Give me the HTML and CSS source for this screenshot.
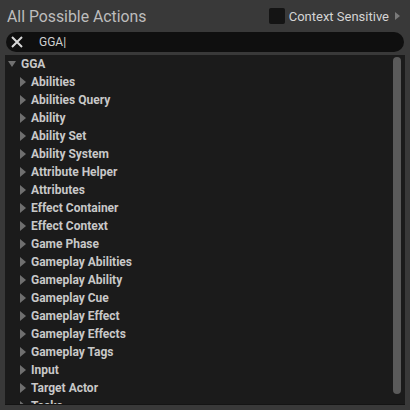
FILE: index.html
```html
<!DOCTYPE html>
<html lang="en">
<head>
  <meta charset="UTF-8" />
  <title>All Possible Actions</title>
  <link rel="stylesheet" href="styles.css">
</head>
<body>
  <div id="menu">
    <div class="header">
      <span class="title">All Possible Actions</span>
      <label class="context">
        <span class="checkbox"></span>
        <span>Context Sensitive</span>
        <span class="arrow-right"></span>
      </label>
    </div>

    <div class="search">
      <svg class="clear" width="12" height="12" viewBox="0 0 12 12">
        <path d="M1 1 L11 11 M11 1 L1 11" stroke="#d8d8d8" stroke-width="2" fill="none" />
      </svg>
      <span class="query">GGA|</span>
    </div>

    <div class="panel">
      <div class="tree">
        <div class="row root"><span class="tri-down"></span>GGA</div>
        <div class="row child"><span class="tri"></span>Abilities</div>
        <div class="row child"><span class="tri"></span>Abilities Query</div>
        <div class="row child"><span class="tri"></span>Ability</div>
        <div class="row child"><span class="tri"></span>Ability Set</div>
        <div class="row child"><span class="tri"></span>Ability System</div>
        <div class="row child"><span class="tri"></span>Attribute Helper</div>
        <div class="row child"><span class="tri"></span>Attributes</div>
        <div class="row child"><span class="tri"></span>Effect Container</div>
        <div class="row child"><span class="tri"></span>Effect Context</div>
        <div class="row child"><span class="tri"></span>Game Phase</div>
        <div class="row child"><span class="tri"></span>Gameplay Abilities</div>
        <div class="row child"><span class="tri"></span>Gameplay Ability</div>
        <div class="row child"><span class="tri"></span>Gameplay Cue</div>
        <div class="row child"><span class="tri"></span>Gameplay Effect</div>
        <div class="row child"><span class="tri"></span>Gameplay Effects</div>
        <div class="row child"><span class="tri"></span>Gameplay Tags</div>
        <div class="row child"><span class="tri"></span>Input</div>
        <div class="row child"><span class="tri"></span>Target Actor</div>
        <div class="row child"><span class="tri"></span>Tasks</div>
      </div>
      <div class="scrollbar"><div class="thumb"></div></div>
    </div>
  </div>
</body>
</html>
```

FILE: styles.css
```css
* {
  margin: 0;
  padding: 0;
  box-sizing: border-box;
}

body {
  width: 410px;
  height: 410px;
  overflow: hidden;
  background: #393939;
  font-family: Roboto, "Noto Sans", sans-serif;
  color: #c4c4c4;
}

#menu {
  display: flex;
  flex-direction: column;
  height: 410px;
  padding: 0 5px 5px 5px;
}

.header {
  display: flex;
  align-items: center;
  justify-content: space-between;
  height: 32px;
  padding: 0 5px 0 2px;
}

.title {
  font-size: 15.8px;
  color: #bdbdbd;
}

.context {
  display: flex;
  align-items: center;
  font-size: 13px;
  color: #d4d4d4;
}

.checkbox {
  width: 16px;
  height: 16px;
  background: #141414;
  border-radius: 2px;
  margin-right: 4px;
}

.arrow-right {
  width: 0;
  height: 0;
  border-top: 4px solid transparent;
  border-bottom: 4px solid transparent;
  border-left: 5px solid #7a7a7a;
  margin-left: 6px;
}

.search {
  display: flex;
  align-items: center;
  height: 20px;
  margin: 0 1px 3px 1px;
  background: #0f0f0f;
  border-radius: 10px;
  padding-left: 5px;
}

.clear {
  margin-right: 16px;
}

.query {
  font-size: 12px;
  color: #cfcfcf;
}

.panel {
  flex: 1;
  display: flex;
  background: #1b1b1b;
  border-bottom: 1px solid #141414;
  overflow: hidden;
}

.tree {
  flex: 1;
  overflow: hidden;
}

.row {
  display: flex;
  align-items: center;
  height: 18px;
  font-size: 12px;
  font-weight: bold;
  color: #c8c8c8;
  flex-shrink: 0;
}

.root {
  padding-left: 3px;
}

.child {
  padding-left: 15px;
}

.tri-down {
  width: 0;
  height: 0;
  border-left: 4px solid transparent;
  border-right: 4px solid transparent;
  border-top: 6px solid #707070;
  margin-right: 5px;
}

.tri {
  width: 0;
  height: 0;
  border-top: 5px solid transparent;
  border-bottom: 5px solid transparent;
  border-left: 6px solid #6f6f6f;
  margin-right: 5px;
}

.scrollbar {
  width: 12px;
  padding: 2px 3px 10px 0;
}

.thumb {
  width: 8px;
  height: 100%;
  background: #5a5a5a;
  border-radius: 4px;
}
```
